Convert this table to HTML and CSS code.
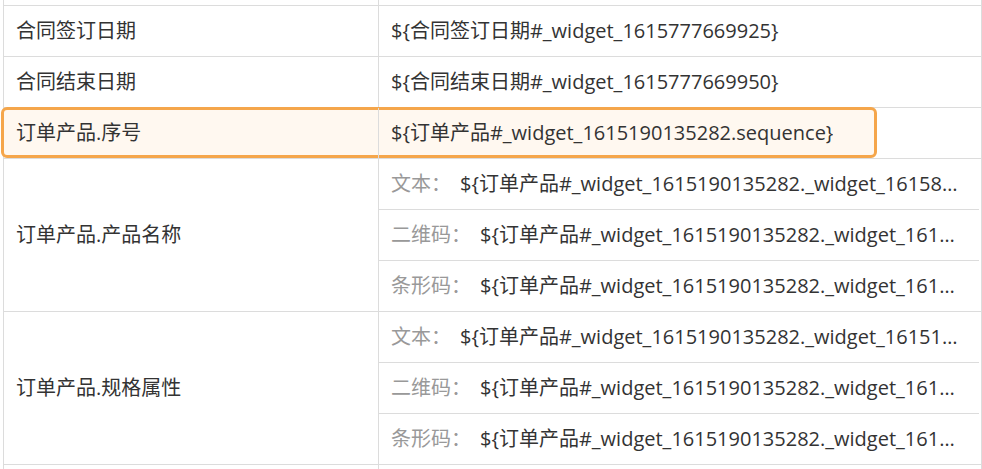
FILE: index.html
```html
<!DOCTYPE html>
<html lang="zh">
<head>
<meta charset="utf-8">
<link rel="stylesheet" href="styles.css">
</head>
<body>
<div class="table">
  <div class="row row-partial">
    <div class="cell key"></div>
    <div class="cell val"></div>
  </div>
  <div class="row">
    <div class="cell key">合同签订日期</div>
    <div class="cell val"><span class="v">${合同签订日期#_widget_1615777669925}</span></div>
  </div>
  <div class="row">
    <div class="cell key">合同结束日期</div>
    <div class="cell val"><span class="v">${合同结束日期#_widget_1615777669950}</span></div>
  </div>
  <div class="row active">
    <div class="highlight"></div>
    <div class="cell key">订单产品.序号</div>
    <div class="cell val"><span class="v">${订单产品#_widget_1615190135282.sequence}</span></div>
  </div>
  <div class="row group">
    <div class="cell key">订单产品.产品名称</div>
    <div class="subs">
      <div class="sub"><span class="lbl">文本：</span><span class="v">${订单产品#_widget_1615190135282._widget_1615828000001}</span></div>
      <div class="sub"><span class="lbl">二维码：</span><span class="v">${订单产品#_widget_1615190135282._widget_1615828000001}</span></div>
      <div class="sub"><span class="lbl">条形码：</span><span class="v">${订单产品#_widget_1615190135282._widget_1615828000001}</span></div>
    </div>
  </div>
  <div class="row group">
    <div class="cell key">订单产品.规格属性</div>
    <div class="subs">
      <div class="sub"><span class="lbl">文本：</span><span class="v">${订单产品#_widget_1615190135282._widget_1615190135999}</span></div>
      <div class="sub"><span class="lbl">二维码：</span><span class="v">${订单产品#_widget_1615190135282._widget_1615190135999}</span></div>
      <div class="sub"><span class="lbl">条形码：</span><span class="v">${订单产品#_widget_1615190135282._widget_1615190135999}</span></div>
    </div>
  </div>
  <div class="row">
    <div class="cell key"></div>
    <div class="cell val"></div>
  </div>
</div>
</body>
</html>
```
FILE: styles.css
```css
html, body {
  margin: 0;
  padding: 0;
  background: #fff;
  overflow: hidden;
}
body {
  font-family: "Open Sans", "Noto Sans CJK SC", sans-serif;
  font-size: 20px;
  color: #333;
}
.table {
  margin-left: 3px;
  width: 977px;
  border-left: 1px solid #dcdcdc;
  border-right: 1px solid #dcdcdc;
  margin-top: -45px;
}
.row {
  position: relative;
  display: grid;
  grid-template-columns: 375px 600px;
  border-bottom: 1px solid #dcdcdc;
}
.cell {
  position: relative;
  z-index: 1;
  height: 50px;
  display: flex;
  align-items: center;
  box-sizing: border-box;
  padding-bottom: 3px;
  white-space: nowrap;
  overflow: hidden;
}
.key {
  padding-left: 12px;
  border-right: 1px solid #dcdcdc;
}
.val {
  padding-left: 12px;
  padding-right: 20px;
}
.group .key {
  height: auto;
}
.subs {
  display: flex;
  flex-direction: column;
}
.sub {
  height: 50px;
  box-sizing: border-box;
  display: flex;
  align-items: center;
  padding-left: 12px;
  padding-right: 20px;
  padding-bottom: 3px;
  border-bottom: 1px solid #dcdcdc;
  white-space: nowrap;
  overflow: hidden;
  min-width: 0;
}
.sub:last-child {
  border-bottom: none;
  height: 50px;
}
.subs .sub {
  height: 51px;
}
.subs .sub:last-child {
  height: 50px;
}
.lbl {
  color: #999;
  flex: none;
  margin-right: 9px;
}
.v {
  overflow: hidden;
  text-overflow: ellipsis;
  white-space: nowrap;
  min-width: 0;
}
.highlight {
  position: absolute;
  z-index: 0;
  left: -3px;
  top: -1px;
  width: 876px;
  height: 51px;
  box-sizing: border-box;
  background: #fff8f0;
  border: 3px solid #f5a64b;
  border-radius: 6px;
  pointer-events: none;
}
```
